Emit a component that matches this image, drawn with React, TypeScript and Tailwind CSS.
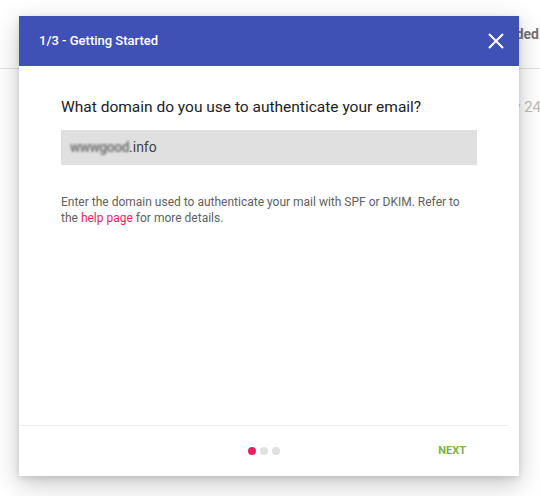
import React from 'react';

export default function App() {
  return (
    <div className="relative w-[540px] h-[496px] overflow-hidden bg-white font-['Roboto',sans-serif]">
      {/* page behind the dialog */}
      <div className="h-[69px] border-b border-[#e0e0e0] flex items-center justify-end pr-[1px]">
        <span className="text-[14px] font-bold text-[#757575]">Excluded</span>
      </div>
      <div className="flex justify-end -mr-[1px] pt-[27px]">
        <span className="text-[15px] text-[#bdbdbd]">May 24</span>
      </div>

      {/* dialog */}
      <div className="absolute left-[19px] top-[16px] w-[500px] h-[460px] bg-white flex flex-col shadow-[0_8px_24px_rgba(0,0,0,0.22),0_2px_6px_rgba(0,0,0,0.12)]">
        <div className="h-[50px] bg-[#3f51b5] flex items-center justify-between pl-[20px] pr-[14px]">
          <span className="text-white text-[13px] font-medium">1/3 - Getting Started</span>
          <svg width="18" height="18" viewBox="0 0 18 18" className="text-white">
            <path d="M2 2L16 16M16 2L2 16" stroke="currentColor" strokeWidth="2" />
          </svg>
        </div>

        <div className="flex-1 px-[42px] pt-[31px]">
          <h2 className="text-[15.5px] leading-[21px] text-[#212121]">
            What domain do you use to authenticate your email?
          </h2>
          <div className="mt-[12px] h-[35px] bg-[#e0e0e0] flex items-center pl-[9px] text-[14px] text-[#424242]">
            <span className="text-[#7a7a7a] blur-[1px] font-bold tracking-[-0.5px]">wwwgood</span>
            <span>.info</span>
          </div>
          <p className="mt-[29px] text-[12px] leading-[16px] text-[#616161]">
            Enter the domain used to authenticate your mail with SPF or DKIM. Refer to the{' '}
            <span className="text-[#e91e63]">help page</span> for more details.
          </p>
        </div>

        <div className="border-t border-[#eeeeee] mr-[10px] h-[51px] flex items-center">
          <div className="flex-1 flex justify-center gap-[4px] pl-[0px]">
            <span className="w-[8px] h-[8px] rounded-full bg-[#e91e63]" />
            <span className="w-[8px] h-[8px] rounded-full bg-[#e0e0e0]" />
            <span className="w-[8px] h-[8px] rounded-full bg-[#e0e0e0]" />
          </div>
          <button className="absolute right-[53px] bottom-[17px] text-[11px] font-bold text-[#7cb342]">
            NEXT
          </button>
        </div>
      </div>
    </div>
  );
}
